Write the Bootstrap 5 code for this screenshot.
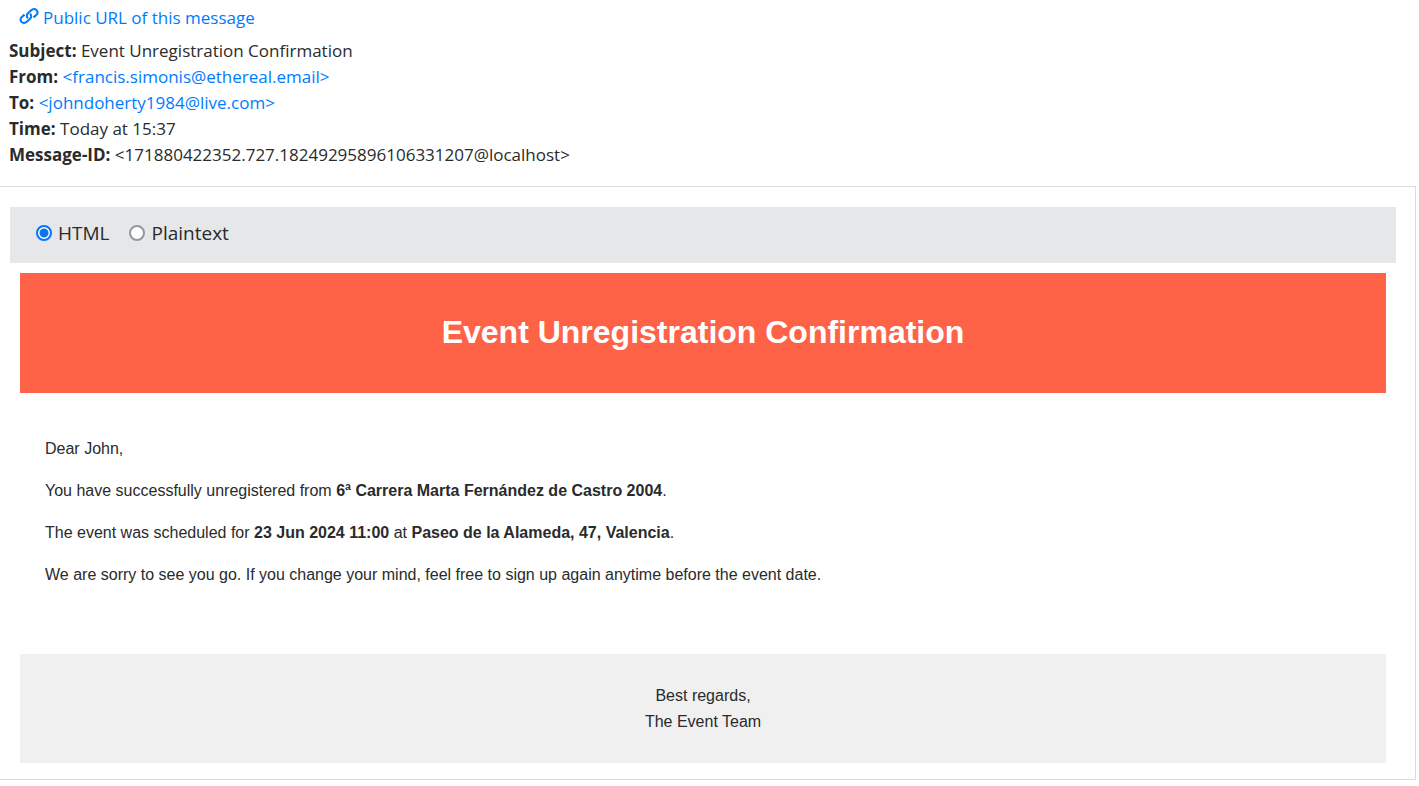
<!DOCTYPE html>
<html lang="en">
<head>
<meta charset="utf-8">
<meta name="viewport" content="width=device-width, initial-scale=1">
<title>Event Unregistration Confirmation</title>
<link href="https://cdn.jsdelivr.net/npm/bootstrap@5.3.0/dist/css/bootstrap.min.css" rel="stylesheet">
<style>
  body { font-family: "Segoe UI", "Open Sans", sans-serif; font-size: 17px; line-height: 26px; color: #292b2c; background: #fff; }
  a { color: #007bff; text-decoration: none; }
  a:hover { text-decoration: underline; }
  .message-head { padding: 5px 10px 18px 9px; }
  .public-link { gap: 4px; padding: 0 10px; margin-bottom: 7px; }
  .message-panel { margin-right: 3px; padding: 20px 19px 16px 10px; border: 1px solid #d9d9e3; border-left: 0; }
  .view-switch { gap: 20px; height: 56px; padding: 0 26px 4px; background: #e6e7e8; font-size: 19px; }
  .view-option { gap: 6px; }
  .view-option input { appearance: none; width: 16px; height: 16px; margin: 0; border: 2px solid #8f9a9f; border-radius: 50%; background: #fff; }
  .view-option input:checked { border-color: #0075ff; background: radial-gradient(circle, #1073e6 4px, #fff 5px); }
  .mail { margin: 10px 10px 0; font-family: "Liberation Sans", Arial, sans-serif; font-size: 16px; }
  .mail-banner { padding: 39px 20px 41px; background: #ff6347; }
  .mail-banner h1 { font-size: 32px; line-height: 40px; font-weight: 700; }
  .mail-text { padding: 43px 25px 50px; }
  .mail-text p { margin-bottom: 16px; }
  .mail-foot { padding: 29px 20px 28px; background: #f0f0f0; }
</style>
</head>
<body>
<header class="message-head">
  <div class="d-flex">
    <a href="#" class="public-link d-flex align-items-center"><svg width="20" height="20" viewBox="0 0 20 20" fill="none" stroke="currentColor" stroke-width="2.1" stroke-linecap="butt" stroke-linejoin="round" aria-hidden="true"><g transform="translate(0 -1)"><path d="M8.900 11.400C7.300 9.700 7.500 7.500 9.200 6L12.200 3.300C13.800 1.900 16.200 1.700 17.500 3.100C18.900 4.600 18.700 6.600 17.200 8L14.500 10.400"/><path d="M11.100 6.600C12.700 8.300 12.500 10.500 10.800 12L7.800 14.700C6.200 16.100 3.800 16.300 2.500 14.900C1.100 13.400 1.300 11.400 2.800 10L5.500 7.600"/></g></svg><span>Public URL of this message</span></a>
  </div>
  <div><strong>Subject:</strong> Event Unregistration Confirmation</div>
  <div><strong>From:</strong> <a href="mailto:francis.simonis@ethereal.email">&lt;francis.simonis@ethereal.email&gt;</a></div>
  <div><strong>To:</strong> <a href="mailto:johndoherty1984@live.com">&lt;johndoherty1984@live.com&gt;</a></div>
  <div><strong>Time:</strong> Today at 15:37</div>
  <div class="text-break"><strong>Message-ID:</strong> &lt;171880422352.727.18249295896106331207@localhost&gt;</div>
</header>
<main class="message-panel">
  <form class="view-switch d-flex align-items-center">
    <label class="view-option d-flex align-items-center" for="view-html"><input type="radio" name="view" id="view-html" checked>HTML</label>
    <label class="view-option d-flex align-items-center" for="view-plain"><input type="radio" name="view" id="view-plain">Plaintext</label>
  </form>
  <article class="mail">
    <div class="mail-banner text-center text-white"><h1 class="mb-0">Event Unregistration Confirmation</h1></div>
    <div class="mail-text">
      <p>Dear John,</p>
      <p>You have successfully unregistered from <strong>6ª Carrera Marta Fernández de Castro 2004</strong>.</p>
      <p>The event was scheduled for <strong>23 Jun 2024 11:00</strong> at <strong>Paseo de la Alameda, 47, Valencia</strong>.</p>
      <p>We are sorry to see you go. If you change your mind, feel free to sign up again anytime before the event date.</p>
    </div>
    <div class="mail-foot text-center">Best regards,<br>The Event Team</div>
  </article>
</main>
<script src="https://cdn.jsdelivr.net/npm/bootstrap@5.3.0/dist/js/bootstrap.bundle.min.js"></script>
</body>
</html>
